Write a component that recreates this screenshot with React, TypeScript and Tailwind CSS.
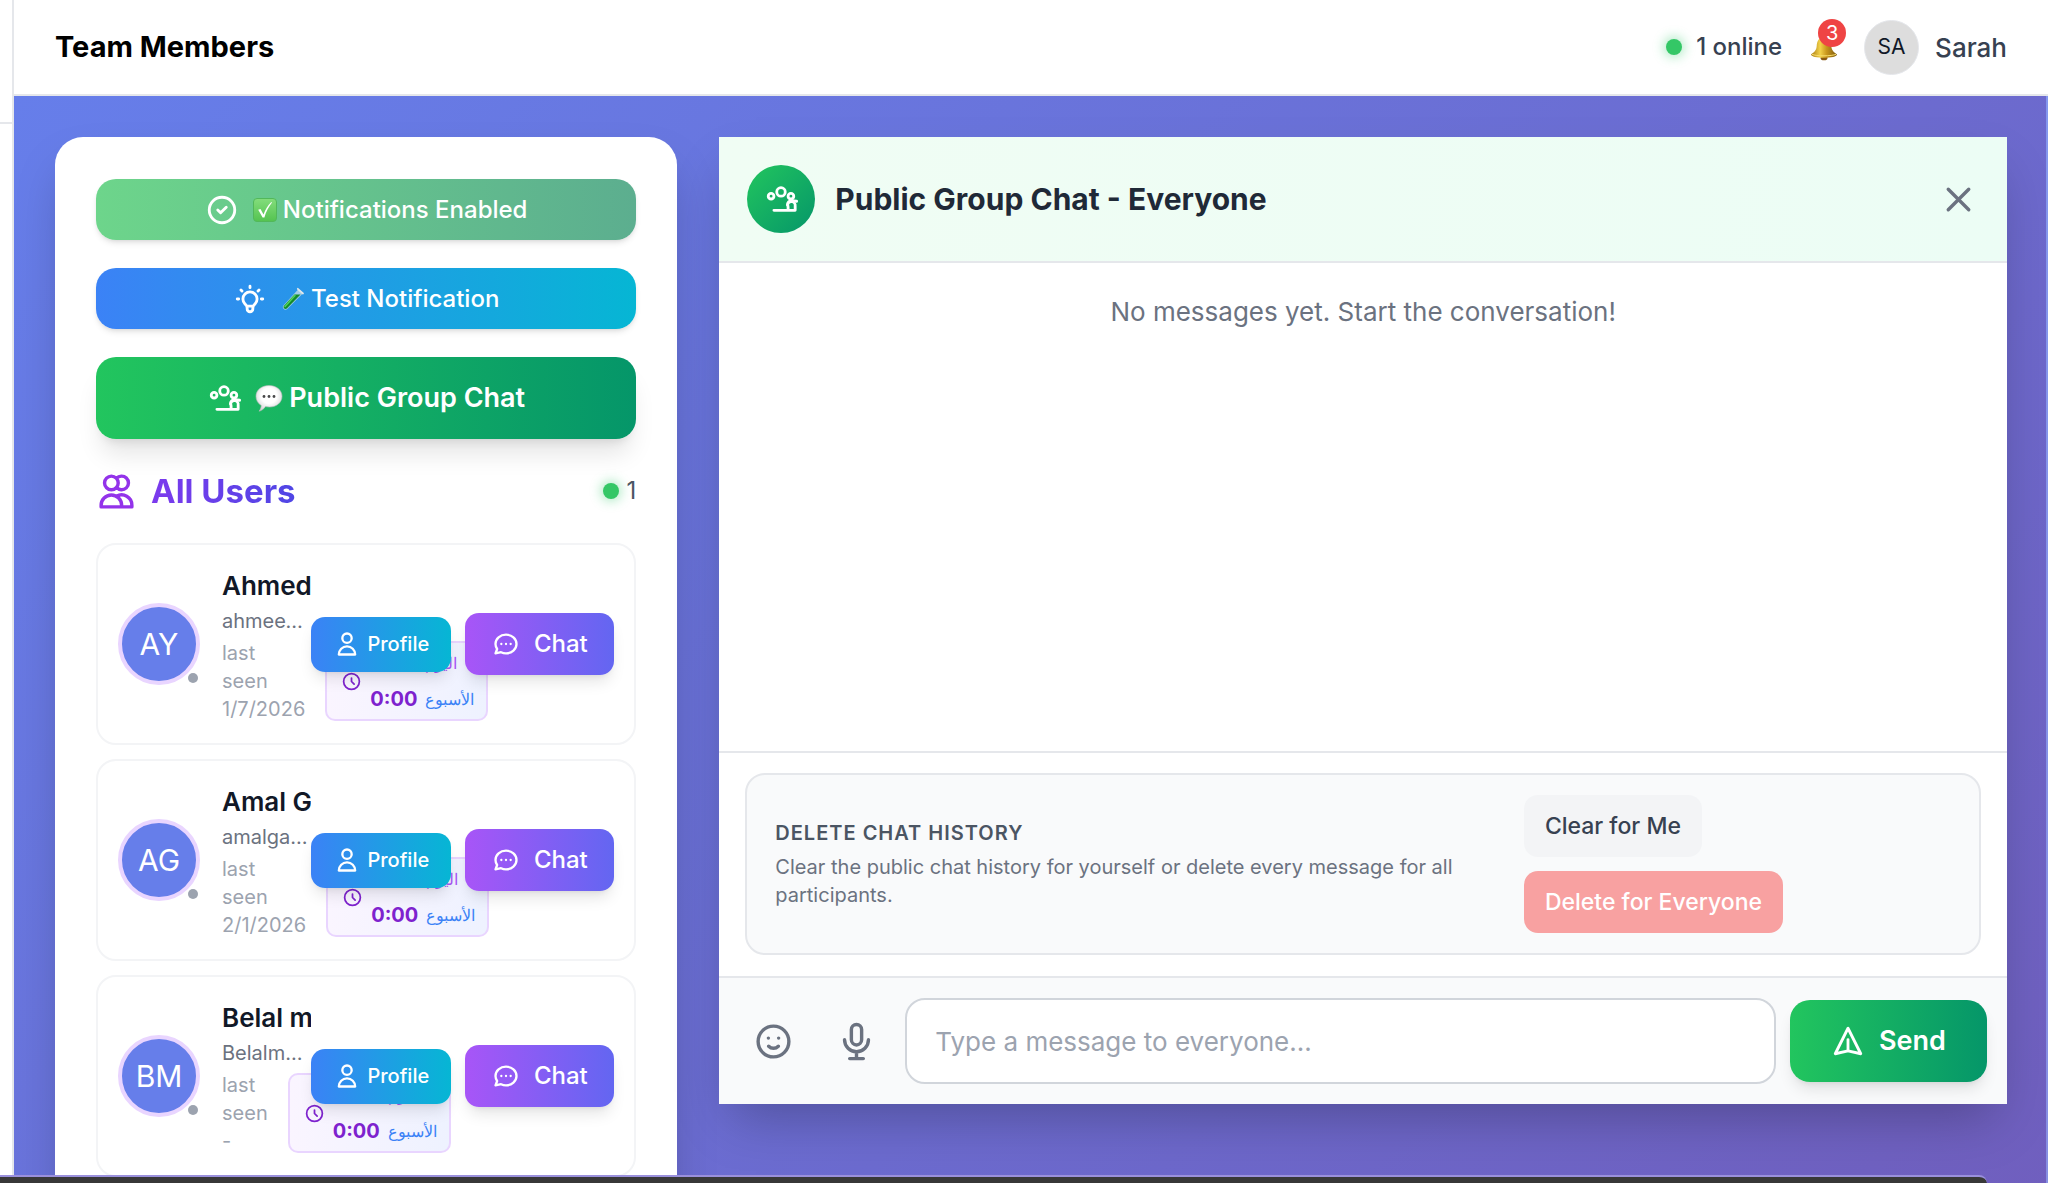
import type { ReactNode } from 'react';

type IconProps = { d: string | string[]; className: string };

function Icon({ d, className }: IconProps) {
  const paths = Array.isArray(d) ? d : [d];
  return (
    <svg
      aria-hidden="true"
      viewBox="0 0 24 24"
      fill="none"
      stroke="currentColor"
      strokeWidth="2"
      strokeLinecap="round"
      strokeLinejoin="round"
      className={`shrink-0 ${className}`}
    >
      {paths.map((p) => (
        <path key={p} d={p} />
      ))}
    </svg>
  );
}

const icons = {
  check: 'M9 12l2 2 4-4m6 2a9 9 0 11-18 0 9 9 0 0118 0z',
  bulb: 'M9.663 17h4.673M12 3v1m6.364 1.636l-.707.707M21 12h-1M4 12H3m3.343-5.657l-.707-.707m2.828 9.9a5 5 0 117.072 0l-.548.547A3.374 3.374 0 0014 18.469V19a2 2 0 11-4 0v-.531c0-.895-.356-1.754-.988-2.386l-.548-.547z',
  group: [
    'M7 20h15v-3a2.700 2.700 0 00-5.356-.857M17 20v-2c0-.656-.126-1.283-.356-1.857',
    'M16.644 16.143C16.500 14.500 18 13 19.500 13.200L23 13.600',
    'M15 7a3 3 0 11-6 0 3 3 0 016 0zm6 3a2 2 0 11-4 0 2 2 0 014 0zM7 10a2 2 0 11-4 0 2 2 0 014 0z',
  ],
  users:
    'M12 4.354a4 4 0 110 5.292M15 21H3v-1a6 6 0 0112 0v1zm0 0h6v-1a6 6 0 00-9-5.197M13 7a4 4 0 11-8 0 4 4 0 018 0z',
  user: 'M16 7a4 4 0 11-8 0 4 4 0 018 0zM12 14a7 7 0 00-7 7h14a7 7 0 00-7-7z',
  chat: 'M8 12h.01M12 12h.01M16 12h.01M21 12c0 4.418-4.03 8-9 8a9.863 9.863 0 01-4.255-.949L3 20l1.395-3.720C3.512 15.042 3 13.574 3 12c0-4.418 4.03-8 9-8s9 3.582 9 8z',
  clock: 'M12 8v4l3 3m6-3a9 9 0 11-18 0 9 9 0 0118 0z',
  close: 'M6 18L18 6M6 6l12 12',
  smile:
    'M14.828 14.828a4 4 0 01-5.656 0M9 10h.01M15 10h.01M21 12a9 9 0 11-18 0 9 9 0 0118 0z',
  mic: 'M19 11a7 7 0 01-7 7m0 0a7 7 0 01-7-7m7 7v4m0 0H8m4 0h4m-4-8a3 3 0 01-3-3V5a3 3 0 116 0v6a3 3 0 01-3 3z',
  send: 'M12 19l9 2-9-18-9 18 9-2zm0 0v-8',
};

function CheckBadge() {
  return (
    <svg aria-hidden="true" viewBox="0 0 24 24" className="size-6 shrink-0">
      <defs>
        <linearGradient id="badge" x1="0" y1="0" x2="0" y2="1">
          <stop offset="0" stopColor="#84dd7c" />
          <stop offset="1" stopColor="#54c350" />
        </linearGradient>
      </defs>
      <rect x="0.500" y="0.500" width="23" height="23" rx="3.500" fill="url(#badge)" stroke="#52b85a" />
      <path d="M5.200 11.800l2.300-.8 3 5.500C12.300 11.500 14.700 7.500 18.300 4l.7.600C15.600 9 13 14 11.400 19.500H9.600z" fill="#fff" />
    </svg>
  );
}

function TestTube() {
  return (
    <svg aria-hidden="true" viewBox="0 0 24 24" className="size-6 shrink-0">
      <path d="M17.500 2l4.500 4.300L6 22.300c-2 1.500-5-1-4-3.300z" fill="#c9dfe6" fillOpacity=".75" />
      <path d="M13.500 7.500h6L5.800 21.600c-1.800 1.200-4-.8-3-2.700z" fill="#138a2c" />
      <path d="M14 8.500L4 19.500" stroke="#4fd45c" strokeWidth="1.500" strokeLinecap="round" />
      <path d="M16.800 1.800l5.200 4.700" stroke="#dfe7ea" strokeWidth="1.800" strokeLinecap="round" />
    </svg>
  );
}

function SpeechBubble() {
  return (
    <svg aria-hidden="true" viewBox="0 0 28 28" className="size-7 shrink-0">
      <defs>
        <radialGradient id="bubble" cx=".5" cy=".4" r=".6">
          <stop offset=".5" stopColor="#fff" />
          <stop offset="1" stopColor="#d3d3d5" />
        </radialGradient>
      </defs>
      <path
        d="M14 1.500C21.200 1.500 27 6 27 12.300S21.500 23 14.500 23c-1.500 0-2.800-.2-4-.5C9 24.800 6.500 26.800 4 27.200c1.400-1.700 2.200-3.600 2.300-5.700C3 19.500 1 16.300 1 12.300 1 6 6.800 1.500 14 1.500z"
        fill="url(#bubble)"
        stroke="#bcbcc0"
        strokeWidth=".6"
      />
      <g fill="#48484a">
        <circle cx="9" cy="12.500" r="1.400" />
        <circle cx="14" cy="12.500" r="1.400" />
        <circle cx="19" cy="12.500" r="1.400" />
      </g>
    </svg>
  );
}

function Bell() {
  return (
    <svg aria-hidden="true" viewBox="0 0 28 28" className="size-7">
      <defs>
        <linearGradient id="bell" x1="0" y1="0" x2="1" y2="0">
          <stop offset="0" stopColor="#a87a13" />
          <stop offset=".35" stopColor="#f3d24a" />
          <stop offset=".6" stopColor="#c9971c" />
          <stop offset="1" stopColor="#7d5a10" />
        </linearGradient>
      </defs>
      <circle cx="14" cy="3.500" r="2" fill="#c9971c" />
      <ellipse cx="14" cy="25" rx="3.500" ry="2.300" fill="#8a5a12" />
      <path d="M14 4c5 0 7 4 7.300 9 .3 4.500 2.500 6 5.700 8.500 0 2-6 3.300-13 3.300S1 23.500 1 21.500C4.200 19 6.400 17.500 6.700 13 7 8 9 4 14 4z" fill="url(#bell)" />
      <path d="M2 21.300c4 2 20 2 24 0" fill="none" stroke="#f7dc6a" strokeWidth="1" />
    </svg>
  );
}

function OnlineDot() {
  return <span className="size-4 rounded-full bg-[#34c766] shadow-[0_0_12px_2px_rgba(34,197,94,0.4)]" />;
}

type Member = { initials: string; name: string; email: string; seen: string };

const members: Member[] = [
  { initials: 'AY', name: 'Ahmed Y', email: 'ahmeey@mail', seen: '1/7/2026' },
  { initials: 'AG', name: 'Amal Gamal', email: 'amalgamal', seen: '2/1/2026' },
  { initials: 'BM', name: 'Belal mo', email: 'Belalmohamed', seen: '-' },
];

function HoursRow({ label, className }: { label: string; className: string }) {
  return (
    <div className="flex items-center gap-2">
      <span className="text-[20px] font-bold text-[#7e22ce]">0:00</span>
      <span lang="ar" className={`text-[16px] ${className}`}>
        {label}
      </span>
    </div>
  );
}

function MemberCard({ member }: { member: Member }) {
  return (
    <li className="flex items-center rounded-[20px] border-2 border-[#f3f4f6] bg-white p-5">
      <div className="relative mr-[22px] shrink-0">
        <div className="flex size-[82px] items-center justify-center rounded-full border-[4px] border-[#e9d5ff] bg-[#667eea] text-[30px] text-white">
          {member.initials}
        </div>
        <span className="absolute right-0.5 bottom-0.5 size-2.5 rounded-full bg-[#9ca3af]" />
      </div>
      <div className="min-w-0 flex-1">
        <h3 className="overflow-hidden text-[26px] leading-[42px] font-semibold whitespace-nowrap text-[#111827]">
          {member.name}
        </h3>
        <p className="truncate text-[20px] leading-7 text-[#6b7280]">{member.email}</p>
        <div className="mt-1 flex items-center gap-5">
          <p className="w-min text-[20px] leading-7 text-[#9ca3af]">last seen {member.seen}</p>
          <div className="flex shrink-0 items-center gap-2 rounded-[10px] border-2 border-[#e9d5ff] bg-linear-to-r/srgb from-[#faf5ff] to-[#eef2ff] py-0.5 pr-3 pl-3.5">
            <Icon d={icons.clock} className="size-[21px] text-[#7e22ce]" />
            <div className="leading-9">
              <HoursRow label="اليوم" className="text-[#a855f7]" />
              <HoursRow label="الأسبوع" className="text-[#3b82f6]" />
            </div>
          </div>
        </div>
      </div>
      <div className="relative flex shrink-0 items-center gap-3.5">
        <button
          type="button"
          className="flex h-[55px] w-[140px] items-center justify-center gap-1.5 rounded-[14px] bg-linear-to-r/srgb from-[#3b82f6] to-[#06b6d4] text-[20px] font-medium text-white shadow-lg"
        >
          <Icon d={icons.user} className="size-7" />
          Profile
        </button>
        <button
          type="button"
          className="flex h-[62px] w-[149px] items-center justify-center gap-3.5 rounded-[14px] bg-linear-to-r/srgb from-[#a855f7] to-[#6366f1] text-[24px] font-medium text-white shadow-lg"
        >
          <Icon d={icons.chat} className="size-7" />
          Chat
        </button>
      </div>
    </li>
  );
}

type SideButtonProps = { className: string; icon: string | string[]; emoji: ReactNode; children: ReactNode };

function SideButton({ className, icon, emoji, children }: SideButtonProps) {
  return (
    <button type="button" className={`flex shrink-0 items-center justify-center gap-3.5 rounded-[20px] bg-linear-to-r/srgb text-white ${className}`}>
      <Icon d={icon} className="size-[34px]" />
      <span className="flex items-center gap-1.5">
        {emoji}
        {children}
      </span>
    </button>
  );
}

function Sidebar() {
  return (
    <aside className="flex min-w-0 flex-col self-start rounded-[28px] bg-white px-[41px] py-[42px] shadow-2xl">
      <div className="flex flex-col gap-7">
        <SideButton icon={icons.check} emoji={<CheckBadge />} className="h-[61px] from-[#6dd58b] to-[#5cae8f] text-[24px] font-medium shadow-md">
          Notifications Enabled
        </SideButton>
        <SideButton icon={icons.bulb} emoji={<TestTube />} className="h-[61px] from-[#3b82f6] to-[#06b6d4] text-[24px] font-medium shadow-md">
          Test Notification
        </SideButton>
        <SideButton icon={icons.group} emoji={<SpeechBubble />} className="h-[82px] from-[#22c55e] to-[#059669] text-[27px] font-semibold shadow-xl">
          Public Group Chat
        </SideButton>
      </div>
      <div className="mt-7 flex items-center justify-between">
        <h2 className="flex items-center gap-3.5 text-[33px] leading-[48px] font-bold">
          <Icon d={icons.users} className="size-[41px] text-[#9333ea]" />
          <span className="bg-linear-to-r/srgb from-[#7c3aed] to-[#4f46e5] bg-clip-text text-transparent">All Users</span>
        </h2>
        <p className="flex items-center gap-2 text-[24px] text-[#4b5563]">
          <OnlineDot />1
        </p>
      </div>
      <ul className="mt-7 flex flex-col gap-3.5">
        {members.map((m) => (
          <MemberCard key={m.initials} member={m} />
        ))}
      </ul>
    </aside>
  );
}

function ChatPanel() {
  return (
    <section className="flex h-[967px] min-w-0 flex-col self-start bg-white shadow-2xl">
      <header className="flex items-center border-b-2 border-[#e5e7eb] bg-linear-to-r/srgb from-[#f0fdf4] to-[#ecfdf5] px-7 py-7">
        <div className="flex size-[68px] items-center justify-center rounded-full bg-linear-to-br/srgb from-[#22c55e] to-[#059669] text-white">
          <Icon d={icons.group} className="size-[34px]" />
        </div>
        <h2 className="ml-5 flex-1 text-[30px] font-bold text-[#1f2937]">Public Group Chat - Everyone</h2>
        <button type="button" aria-label="Close chat" className="text-[#6b7280]">
          <Icon d={icons.close} className="size-[41px]" />
        </button>
      </header>
      <div className="flex-1 px-7 py-7 text-center text-[26px] leading-[41px] text-[#6b7280]">
        No messages yet. Start the conversation!
      </div>
      <div className="border-t-2 border-[#e5e7eb] px-[26px] pt-5 pb-[21px]">
        <div className="flex items-center gap-14 rounded-[20px] border-2 border-[#e5e7eb] bg-[#f9fafb] px-7 py-5">
          <div className="flex-[694]">
            <h3 className="text-[20px] leading-7 font-semibold tracking-wider text-[#4b5563]">DELETE CHAT HISTORY</h3>
            <p className="mt-1.5 text-[20px] leading-7 text-[#6b7280]">
              Clear the public chat history for yourself or delete every message for all participants.
            </p>
          </div>
          <div className="flex flex-[428] flex-col items-start gap-3.5 text-[23px] font-medium">
            <button type="button" className="h-[62px] rounded-[14px] bg-[#f3f4f6] px-[21px] text-[#374151]">
              Clear for Me
            </button>
            <button type="button" className="h-[62px] rounded-[14px] bg-[#f8a1a1] px-[21px] text-white">
              Delete for Everyone
            </button>
          </div>
        </div>
      </div>
      <form className="flex items-center gap-3.5 border-t-2 border-[#e5e7eb] bg-[#f9fafb] px-5 py-5" onSubmit={(e) => e.preventDefault()}>
        <button type="button" aria-label="Add emoji" className="p-3.5 text-[#6b7280]">
          <Icon d={icons.smile} className="size-[41px]" />
        </button>
        <button type="button" aria-label="Record voice message" className="p-3.5 text-[#6b7280]">
          <Icon d={icons.mic} className="size-[41px]" />
        </button>
        <input
          type="text"
          aria-label="Message"
          placeholder="Type a message to everyone..."
          className="h-[86px] min-w-0 flex-1 rounded-[20px] border-2 border-[#d1d5db] bg-white px-7 text-[26px] placeholder:text-[#9ca3af]"
        />
        <button
          type="submit"
          className="flex h-[82px] w-[197px] items-center justify-center gap-3.5 rounded-[20px] bg-linear-to-r/srgb from-[#22c55e] to-[#059669] text-[27px] font-semibold text-white shadow-lg"
        >
          <Icon d={icons.send} className="size-[34px]" />
          Send
        </button>
      </form>
    </section>
  );
}

export default function App() {
  return (
    <div className="relative flex h-screen overflow-hidden bg-white font-['Inter','Noto_Sans',sans-serif]">
      <div className="w-3.5 shrink-0 border-r-2 border-[#e5e7eb]">
        <div className="h-[124px] border-b-2 border-[#e5e7eb]" />
      </div>
      <div className="flex min-w-0 flex-1 flex-col">
        <header className="flex h-24 shrink-0 items-center justify-between border-b-2 border-[#e5e7eb] px-[41px]">
          <h1 className="text-[29px] font-bold text-black">Team Members</h1>
          <div className="flex items-center">
            <p className="flex items-center gap-3.5 text-[24px] font-medium text-[#374151]">
              <OnlineDot />1 online
            </p>
            <button type="button" aria-label="Notifications" className="relative ml-7">
              <Bell />
              <span className="absolute -top-3.5 -right-2 flex size-7 items-center justify-center rounded-full bg-[#ef4444] text-[20px] text-white">
                3
              </span>
            </button>
            <span className="ml-[26px] flex size-[55px] items-center justify-center rounded-full border border-[#e5e7eb] bg-[#dddddd] text-[21px] text-[#111827]">
              SA
            </span>
            <span className="ml-4 text-[26px] font-medium text-[#374151]">Sarah</span>
          </div>
        </header>
        <main className="grid min-h-0 flex-1 grid-cols-[622fr_1287fr] gap-[42px] overflow-hidden border-r-2 border-white/20 bg-[linear-gradient(135deg,#667eea_0%,#764ba2_165%)] py-[41px] pr-[39px] pl-[41px]">
          <Sidebar />
          <ChatPanel />
        </main>
      </div>
      <div className="absolute bottom-0 left-0 h-2 w-[97%] rounded-tr-[20px] border-t-2 border-[#9a90dc] bg-[#383838]" />
    </div>
  );
}
